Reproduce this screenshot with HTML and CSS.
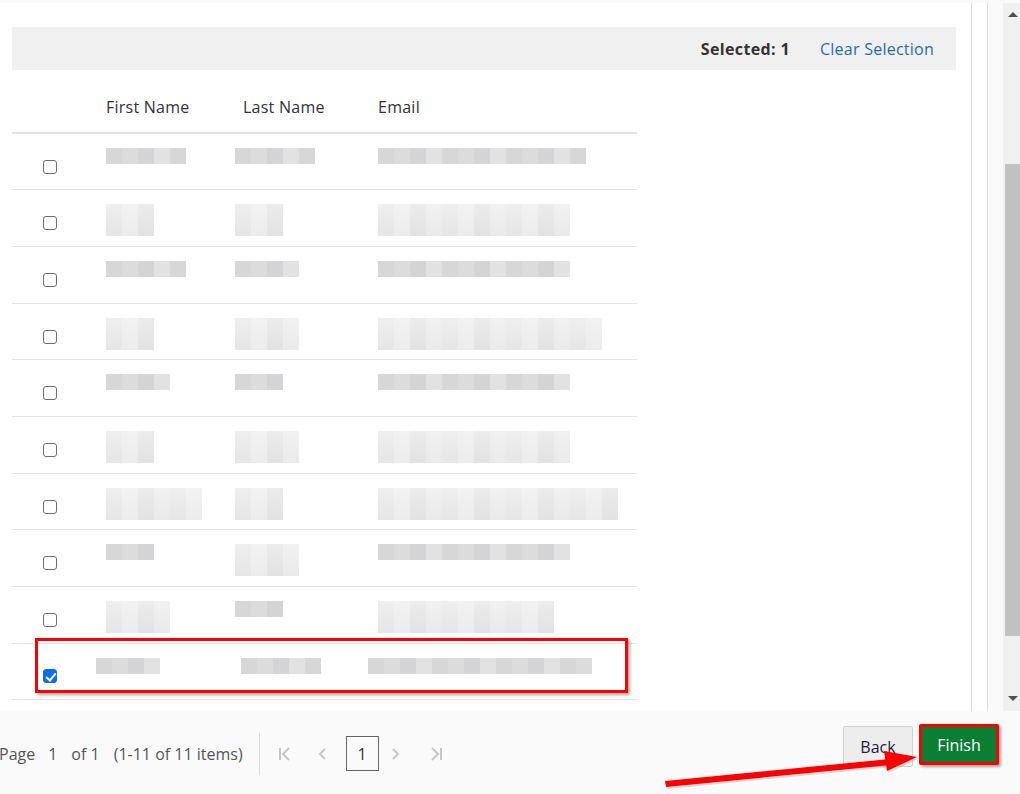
FILE: index.html
```html
<!DOCTYPE html>
<html lang="en">
<head>
  <meta charset="UTF-8">
  <title>Select Users</title>
  <link rel="stylesheet" href="styles.css">
</head>
<body>
  <div class="topline"></div>

  <div class="frame">
    <div class="content">
      <div class="selbar">
        <span class="selcount">Selected: 1</span>
        <a class="clear" href="#">Clear Selection</a>
      </div>

      <table class="grid">
        <thead>
          <tr>
            <th class="c-check"></th>
            <th class="c-first">First Name</th>
            <th class="c-last">Last Name</th>
            <th class="c-email">Email</th>
          </tr>
        </thead>
        <tbody>
          <tr>
            <td class="c-check"><span class="cb"></span></td>
            <td><div class="px" style="width:80px"></div></td>
            <td class="lastcol"><div class="px" style="width:80px"></div></td>
            <td><div class="px" style="width:208px"></div></td>
          </tr>
          <tr>
            <td class="c-check"><span class="cb"></span></td>
            <td><div class="px two" style="width:48px"></div></td>
            <td class="lastcol"><div class="px two" style="width:48px"></div></td>
            <td><div class="px two" style="width:192px"></div></td>
          </tr>
          <tr>
            <td class="c-check"><span class="cb"></span></td>
            <td><div class="px" style="width:80px"></div></td>
            <td class="lastcol"><div class="px" style="width:64px"></div></td>
            <td><div class="px" style="width:192px"></div></td>
          </tr>
          <tr>
            <td class="c-check"><span class="cb"></span></td>
            <td><div class="px two" style="width:48px"></div></td>
            <td class="lastcol"><div class="px two" style="width:64px"></div></td>
            <td><div class="px two" style="width:224px"></div></td>
          </tr>
          <tr>
            <td class="c-check"><span class="cb"></span></td>
            <td><div class="px" style="width:64px"></div></td>
            <td class="lastcol"><div class="px" style="width:48px"></div></td>
            <td><div class="px" style="width:192px"></div></td>
          </tr>
          <tr>
            <td class="c-check"><span class="cb"></span></td>
            <td><div class="px two" style="width:48px"></div></td>
            <td class="lastcol"><div class="px two" style="width:64px"></div></td>
            <td><div class="px two" style="width:192px"></div></td>
          </tr>
          <tr>
            <td class="c-check"><span class="cb"></span></td>
            <td><div class="px two" style="width:96px"></div></td>
            <td class="lastcol"><div class="px two" style="width:48px"></div></td>
            <td><div class="px two" style="width:240px"></div></td>
          </tr>
          <tr>
            <td class="c-check"><span class="cb"></span></td>
            <td><div class="px" style="width:48px"></div></td>
            <td class="lastcol"><div class="px two" style="width:64px"></div></td>
            <td><div class="px" style="width:192px"></div></td>
          </tr>
          <tr>
            <td class="c-check"><span class="cb"></span></td>
            <td><div class="px two" style="width:64px"></div></td>
            <td class="lastcol"><div class="px" style="width:48px"></div></td>
            <td><div class="px two" style="width:176px"></div></td>
          </tr>
          <tr class="picked">
            <td class="c-check"><span class="cb on"></span></td>
            <td><div class="px shift" style="width:64px"></div></td>
            <td class="lastcol"><div class="px nudge" style="width:80px"></div></td>
            <td><div class="px shift" style="width:224px"></div></td>
          </tr>
        </tbody>
      </table>

      <div class="mark"></div>
    </div>
    <div class="rule"></div>
    <div class="gutter"></div>
    <div class="rule"></div>
    <div class="side"></div>
    <div class="scroll">
      <span class="arrow up"></span>
      <div class="thumb"></div>
      <span class="arrow down"></span>
    </div>
  </div>

  <div class="footer">
    <div class="pager">
      <span class="ptxt">Page</span>
      <span class="ptxt">1</span>
      <span class="ptxt">of 1</span>
      <span class="ptxt">(1-11 of 11 items)</span>
      <span class="sep"></span>
      <svg class="nav" width="14" height="14" viewBox="0 0 14 14"><path d="M2 1v12M11 1L5 7l6 6" fill="none" stroke="#c6c6c6" stroke-width="2"/></svg>
      <svg class="nav" width="14" height="14" viewBox="0 0 14 14"><path d="M9 2L4 7l5 5" fill="none" stroke="#c6c6c6" stroke-width="2"/></svg>
      <span class="pagebox">1</span>
      <svg class="nav wide" width="14" height="14" viewBox="0 0 14 14"><path d="M5 2l5 5-5 5" fill="none" stroke="#c6c6c6" stroke-width="2"/></svg>
      <svg class="nav" width="14" height="14" viewBox="0 0 14 14"><path d="M3 1l6 6-6 6M12 1v12" fill="none" stroke="#c6c6c6" stroke-width="2"/></svg>
    </div>
    <div class="actions">
      <button class="btn back">Back</button>
      <button class="btn finish">Finish</button>
    </div>
  </div>

  <svg class="pointer" width="1020" height="794" viewBox="0 0 1020 794">
    <g fill="#ff0000" stroke="none">
      <polygon points="665,781 890,759 891,765 666,787" fill="#9a9a9a" opacity=".35" transform="translate(1,2)"/>
      <polygon points="665,781 890,759 891,765 666,787"/>
      <polygon points="884,751 917,757 887,771" fill="#9a9a9a" opacity=".35" transform="translate(1,2)"/>
      <polygon points="884,751 917,757 887,771"/>
    </g>
  </svg>
</body>
</html>
```

FILE: styles.css
```css
*{
  margin:0;
  padding:0;
  box-sizing: border-box;
}
body {
  width: 1020px;
  height: 794px;
  overflow: hidden;
  font-family: 'Open Sans', 'Liberation Sans', sans-serif;
  font-size: 16px;
  color: #333;
  background: #fff;
  position: relative;
}
.topline{
  height: 3px;
  background: #fafafa;
}
.frame{
  display: flex;
  height: 708px;
}
.content{
  width: 971px;
  padding-left: 12px;
  padding-top: 24px;
  position: relative;
  overflow: hidden;
}
.rule{
  width: 1px;
  background: #dcdcdc;
}
.gutter{
  width: 15px;
  background: #fff;
}
.side{
  width: 15px;
  background: #fafafa;
}
.scroll{
  width: 17px;
  background: #f0f0f0;
  position: relative;
}
.thumb{
  position: absolute;
  left: 2px;
  right: 0;
  top: 161px;
  height: 472px;
  background: #c1c1c1;
}
.arrow{
  position: absolute;
  left: 5px;
  width: 0;
  height: 0;
  border-left: 5px solid transparent;
  border-right: 5px solid transparent;
}
.arrow.up{
  top: 9px;
  border-bottom: 5px solid #505050;
}
.arrow.down{
  top: 693px;
  border-top: 5px solid #505050;
}

.selbar{
  width: 944px;
  height: 43px;
  background: #f0f0f0;
  display: flex;
  justify-content: flex-end;
  align-items: center;
  gap: 30px;
  padding-right: 22px;
}
.selcount{
  font-weight: 700;
  color: #333;
  letter-spacing: .35px;
}
.clear{
  color: #1f6db5;
  text-decoration: none;
  letter-spacing: .25px;
}

.grid{
  margin-top: 15px;
  width: 625px;
  border-collapse: collapse;
  table-layout: fixed;
}
.grid th{
  height: 48px;
  font-weight: 400;
  text-align: left;
  padding: 0 0 4px 8px;
  border-bottom: 2px solid #e3e3e3;
  color: #333;
  letter-spacing: .25px;
}
.c-check{ width: 86px; }
.c-first{ width: 137px; }
.c-last{ width: 135px; }
.grid td{
  height: 56.7px;
  border-bottom: 1px solid #e3e3e3;
  vertical-align: top;
  padding: 14px 0 0 8px;
}
.grid td.lastcol{
  padding-left: 0;
}
.grid td.c-check{
  padding: 26px 0 0 31px;
}
.grid tr.picked td.c-check{
  padding-top: 25px;
}
.cb{
  display: block;
  width: 14px;
  height: 14px;
  border: 1px solid #6f6f6f;
  border-radius: 3px;
  background: #fff;
}
.cb.on{
  background: #0b6cf5;
  border-color: #0b6cf5;
  position: relative;
}
.cb.on::after{
  content: '';
  position: absolute;
  left: 4px;
  top: 1px;
  width: 4px;
  height: 8px;
  border: solid #fff;
  border-width: 0 2px 2px 0;
  transform: rotate(40deg);
}

.px{
  height: 16px;
  background: repeating-linear-gradient(90deg, #d8d7d8 0 16px, #dcdcdc 16px 32px, #d4d4d6 32px 48px, #e2e2e2 48px 64px);
}
.px.two{
  height: 32px;
  background:
    linear-gradient(rgba(255,255,255,.35), rgba(255,255,255,0)),
    repeating-linear-gradient(90deg, #e6e6e6 0 16px, #ececec 16px 32px, #e2e2e2 32px 48px, #eaeaea 48px 64px);
}
.picked .px.shift{
  margin-left: -10px;
}
.picked .px.nudge{
  margin-left: 6px;
}

.mark{
  position: absolute;
  left: 35px;
  top: 635px;
  width: 593px;
  height: 55px;
  border: 3px solid #ff0000;
  box-shadow: 2px 2px 3px rgba(0,0,0,.35);
}

.footer{
  height: 83px;
  background: #fafafa;
  display: flex;
  justify-content: space-between;
  align-items: center;
  padding-right: 21px;
}
.pager{
  display: flex;
  align-items: center;
  color: #555;
  margin-left: -1px;
  margin-top: 2px;
}
.ptxt{
  margin-right: 14px;
}
.ptxt:first-child{
  margin-right: 13px;
}
.sep{
  width: 1px;
  height: 42px;
  background: #dcdcdc;
  margin: 0 18px 0 2px;
}
.nav{
  margin-right: 24px;
}
.nav.wide{
  margin-right: 27px;
}
.pagebox{
  width: 33px;
  height: 35px;
  border: 1px solid #666;
  display: flex;
  align-items: center;
  justify-content: center;
  color: #333;
  margin: 0 9px 0 -8px;
}
.actions{
  display: flex;
  align-items: flex-start;
  align-self: flex-start;
  margin-top: 13px;
  gap: 6px;
}
.btn{
  font-family: 'Open Sans', 'Liberation Sans', sans-serif;
  font-size: 16px;
  height: 41px;
  border-radius: 2px;
}
.back{
  width: 70px;
  margin-top: 2px;
  background: #ededed;
  border: 1px solid #cfcfcf;
  color: #1d1d3a;
}
.finish{
  width: 80px;
  background: #0a7e33;
  color: #fff;
  border: 3px solid #ff0000;
  box-shadow: 2px 2px 3px rgba(0,0,0,.35);
}

.pointer{
  position: absolute;
  left: 0;
  top: 0;
  pointer-events: none;
}
```
